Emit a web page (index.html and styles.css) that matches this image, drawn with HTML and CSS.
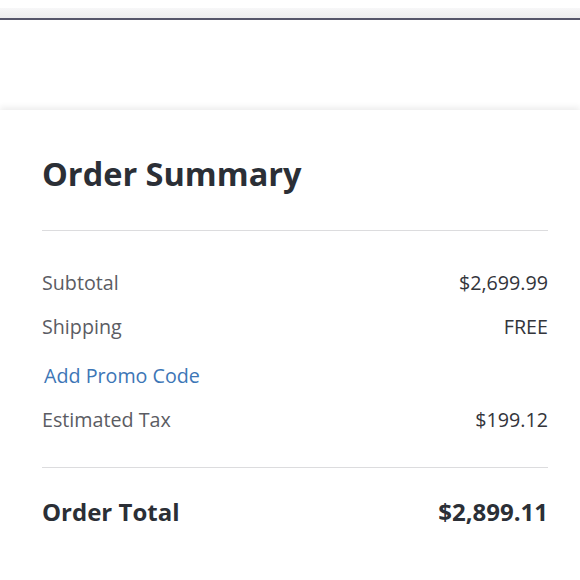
FILE: index.html
```html
<!DOCTYPE html>
<html lang="en">
<head>
<meta charset="utf-8">
<title>Order Summary</title>
<link rel="stylesheet" href="styles.css">
</head>
<body>
<div class="header">
  <div class="header-shade"></div>
  <div class="header-rule"></div>
</div>
<div class="gap"></div>
<section class="summary">
  <h2 class="summary-title">Order Summary</h2>
  <div class="divider"></div>
  <div class="lines">
    <div class="line"><span class="label">Subtotal</span><span class="value">$2,699.99</span></div>
    <div class="line"><span class="label">Shipping</span><span class="value">FREE</span></div>
    <div class="line promo"><a class="promo-link" href="#">Add Promo Code</a></div>
    <div class="line"><span class="label">Estimated Tax</span><span class="value">$199.12</span></div>
  </div>
  <div class="divider"></div>
  <div class="total"><span>Order Total</span><span>$2,899.11</span></div>
</section>
</body>
</html>
```
FILE: styles.css
```css
html, body {
  margin: 0;
  padding: 0;
  background: #ffffff;
}
body {
  font-family: "Open Sans", "Noto Sans", sans-serif;
  color: #2d3038;
}
.header {
  height: 20px;
  display: flex;
  flex-direction: column;
  justify-content: flex-end;
}
.header-shade {
  height: 10px;
  background: linear-gradient(#f7f7f8, #ededee);
}
.header-rule {
  height: 2px;
  background: #56566a;
}
.gap {
  height: 90px;
}
.summary {
  background: #fff;
  box-shadow: 0 -3px 6px rgba(0, 0, 0, 0.07);
  padding: 36px 32px 40px 42px;
}
.summary-title {
  margin: 0;
  font-size: 32.5px;
  font-weight: 700;
  line-height: 56px;
  color: #2b2f36;
}
.divider {
  height: 1px;
  background: #dcdcde;
}
.summary-title + .divider {
  margin-top: 28px;
}
.lines {
  padding: 37px 0 34px;
  display: flex;
  flex-direction: column;
  gap: 16px;
}
.line {
  display: flex;
  justify-content: space-between;
  align-items: center;
  height: 28px;
  font-size: 19.7px;
  font-weight: 400;
}
.line.promo {
  margin-top: 5px;
}
.label {
  color: #5b5c63;
}
.value {
  color: #33353b;
}
.promo-link {
  color: #3d76b6;
  text-decoration: none;
  padding-left: 2px;
}
.total {
  display: flex;
  justify-content: space-between;
  align-items: center;
  margin-top: 27px;
  font-size: 24px;
  font-weight: 700;
  color: #2b2f36;
}
```
